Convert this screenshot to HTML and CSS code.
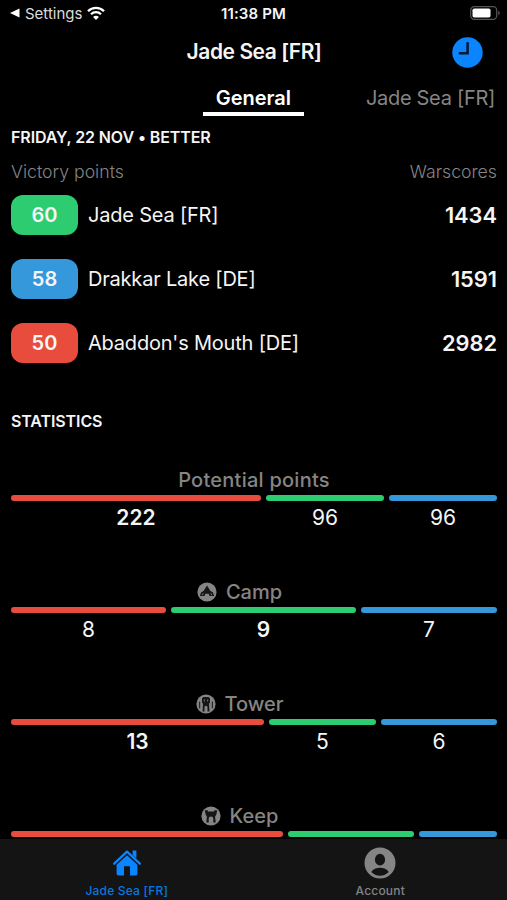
FILE: index.html
```html
<!DOCTYPE html>
<html lang="en">
<head>
  <meta charset="UTF-8">
  <title>Jade Sea [FR]</title>
  <meta name="viewport" content="width=device-width, initial-scale=1.0">
  <link rel="stylesheet" href="styles.css">
</head>
<body>

  <div class="status">
    <div class="status-left">
      <svg width="10" height="10" viewBox="0 0 10 10"><path d="M0 5 9.5 .5v9z" fill="#fff"/></svg>
      <span class="back">Settings</span>
      <svg class="wifi" width="18" height="14" viewBox="0 0 18 14" fill="none" stroke="#fff" stroke-width="2.3">
        <path d="M1 5.2a11.3 11.3 0 0 1 16 0M4 8.3a7 7 0 0 1 10 0"/>
        <path d="M9 14 6.1 10.9a4 4 0 0 1 5.8 0z" fill="#fff" stroke="none"/>
      </svg>
    </div>
    <div class="time">11:38 PM</div>
    <div class="status-right">
      <svg width="30" height="14" viewBox="0 0 30 14">
        <rect x=".7" y=".7" width="26" height="12.6" rx="3.6" fill="none" stroke="#555" stroke-width="1.2"/>
        <rect x="2.5" y="2.5" width="18" height="9" rx="1.8" fill="#fff"/>
        <path d="M28.2 4.7c2 .8 2 3.8 0 4.6z" fill="#555"/>
      </svg>
    </div>
  </div>

  <div class="nav">
    <h1>Jade Sea [FR]</h1>
    <svg class="clock" width="31" height="31" viewBox="0 0 31 31">
      <circle cx="15.5" cy="15.5" r="15.2" fill="#0a84ff"/>
      <path d="M15.6 5.2v11.1H6.8" fill="none" stroke="#03182e" stroke-width="2.5"/>
    </svg>
  </div>

  <div class="tabs">
    <div class="tab active">General</div>
    <div class="tab">Jade Sea [FR]</div>
  </div>

  <div class="content">
    <h2>FRIDAY, 22 NOV • BETTER</h2>
    <div class="labels"><span>Victory points</span><span>Warscores</span></div>
    <div class="world">
      <div class="badge green">60</div>
      <div class="name">Jade Sea [FR]</div>
      <div class="score">1434</div>
    </div>
    <div class="world">
      <div class="badge blue">58</div>
      <div class="name">Drakkar Lake [DE]</div>
      <div class="score">1591</div>
    </div>
    <div class="world">
      <div class="badge red">50</div>
      <div class="name">Abaddon's Mouth [DE]</div>
      <div class="score">2982</div>
    </div>

    <h2 class="stats-title">STATISTICS</h2>

    <div class="stat">
      <div class="stat-name total">Potential points</div>
      <div class="bars">
        <div class="part best" style="width: 250px"><div class="bar red"></div>222</div>
        <div class="part" style="width: 118px"><div class="bar green"></div>96</div>
        <div class="part" style="width: 108px"><div class="bar blue"></div>96</div>
      </div>
    </div>

    <div class="stat">
      <div class="stat-name">
        <svg width="20" height="20" viewBox="0 0 20 20">
          <circle cx="10" cy="10" r="9.6" fill="#858585"/>
          <path d="M10 3.4 11.6 6l1.8 3 2.4 1.2 1.4 3.8h-4.6l-1-2.2H8.4l-1 2.2H2.8l1.4-3.8L6.6 9l1.8-3z" fill="#161616"/>
          <path d="M5.2 13.2l1-1.9M14.8 13.2l-1-1.9" stroke="#777" stroke-width="1"/>
        </svg>
        Camp
      </div>
      <div class="bars">
        <div class="part" style="width: 155px"><div class="bar red"></div>8</div>
        <div class="part best" style="width: 185px"><div class="bar green"></div>9</div>
        <div class="part" style="width: 136px"><div class="bar blue"></div>7</div>
      </div>
    </div>

    <div class="stat">
      <div class="stat-name">
        <svg width="20" height="20" viewBox="0 0 20 20">
          <circle cx="10" cy="10" r="9.6" fill="#858585"/>
          <path d="M6 4.3 7.5 3h5L14 4.3v4.2l-1 1.3.5 7.7h-2v-4.3a1.5 1.5 0 0 0-3 0v4.3h-2L7 9.8 6 8.5z" fill="#161616"/>
          <path d="M3.6 7.5v6.7M16.4 7.5v6.7" stroke="#292929" stroke-width="1.3"/>
          <path d="M8.3 5.5v2M11.7 5.5v2" stroke="#777" stroke-width="1"/>
        </svg>
        Tower
      </div>
      <div class="bars">
        <div class="part best" style="width: 253px"><div class="bar red"></div>13</div>
        <div class="part" style="width: 107px"><div class="bar green"></div>5</div>
        <div class="part" style="width: 116px"><div class="bar blue"></div>6</div>
      </div>
    </div>

    <div class="stat">
      <div class="stat-name">
        <svg width="20" height="20" viewBox="0 0 20 20">
          <circle cx="10" cy="10" r="9.6" fill="#858585"/>
          <path d="M3.8 4.3h3v1.2h6.4V4.3h3l-.9 4.4-1.2 1.8.6 5.9h-2.4v-3.7a2.3 2.3 0 0 0-4.6 0v3.7H5.3l.6-5.9-1.2-1.8z" fill="#161616"/>
        </svg>
        Keep
      </div>
      <div class="bars">
        <div class="part best" style="width: 272px"><div class="bar red"></div></div>
        <div class="part" style="width: 126px"><div class="bar green"></div></div>
        <div class="part" style="width: 78px"><div class="bar blue"></div></div>
      </div>
    </div>
  </div>

  <div class="tabbar">
    <div class="tabbar-item selected">
      <svg width="32" height="32" viewBox="0 0 32 32">
        <path d="M3.2 16.7 16 4.6l12.8 12.1" fill="none" stroke="#0a84ff" stroke-width="2.3" stroke-linecap="round" stroke-linejoin="round"/>
        <path d="M21.6 3.6h3.8v8l-3.8-3.5z" fill="#0a84ff"/>
        <path d="M16 8.2 26.4 17.8v8.8a1.9 1.9 0 0 1-1.9 1.9H19v-9.2h-6v9.2H7.5a1.9 1.9 0 0 1-1.9-1.9v-8.8z" fill="#0a84ff"/>
      </svg>
      <span>Jade Sea [FR]</span>
    </div>
    <div class="tabbar-item">
      <svg width="32" height="32" viewBox="0 0 32 32">
        <circle cx="16" cy="16" r="15.5" fill="#858585"/>
        <ellipse cx="16" cy="12.7" rx="5.1" ry="5.9" fill="#141414"/>
        <path d="M7.4 24.9c1.5-3 5-4.2 8.6-4.2s7.1 1.2 8.6 4.2c-2.1 2.4-5.1 3.8-8.6 3.8s-6.5-1.4-8.6-3.8z" fill="#141414"/>
      </svg>
      <span>Account</span>
    </div>
  </div>

</body>
</html>
```
FILE: styles.css
```css
* {
  box-sizing: border-box;
}

body {
  margin: 0;
  height: 900px;
  overflow: hidden;
  background: #000;
  color: #f5f5f5;
  font-family: Inter, sans-serif;
  font-size: 20px;
  display: flex;
  flex-direction: column;
}

svg {
  display: block;
  flex: none;
}

.status {
  height: 26px;
  flex: none;
  display: grid;
  grid-template-columns: 1fr auto 1fr;
  align-items: center;
  padding: 0 7px 0 10px;
  font-size: 15px;
}

.status-left {
  display: flex;
  align-items: center;
  gap: 5px;
}

.back {
  color: #ddd;
}

.time {
  margin-right: 3px;
  font-weight: 600;
  letter-spacing: 0.15px;
}

.status-right {
  display: flex;
  justify-content: flex-end;
}

.nav {
  height: 52px;
  flex: none;
  display: grid;
  grid-template-columns: 1fr auto 1fr;
  align-items: center;
  padding-right: 24px;
  padding-left: 25px;
}

h1 {
  grid-column: 2;
  margin: 0;
  font-size: 21px;
  line-height: 26px;
  font-weight: 600;
  letter-spacing: -0.45px;
}

.clock {
  justify-self: end;
}

.tabs {
  height: 38px;
  flex: none;
  display: flex;
  justify-content: flex-end;
  gap: 62px;
  padding-right: 12px;
  line-height: 40px;
  color: #858585;
}

.tab {
  letter-spacing: -0.3px;
}

.tab.active {
  width: 101px;
  text-align: center;
  color: #fff;
  font-weight: 600;
  letter-spacing: 0;
  border-bottom: 4px solid #fff;
}

.content {
  flex: 1;
  overflow: hidden;
  padding: 11px 10px 0 11px;
}

h2 {
  margin: 0;
  font-size: 16px;
  line-height: 20px;
  font-weight: 600;
  letter-spacing: -0.1px;
}

.labels {
  display: flex;
  justify-content: space-between;
  margin-top: 15px;
  margin-bottom: 13px;
  font-size: 17.7px;
  line-height: 20px;
  font-weight: 300;
  color: #858585;
}

.world {
  display: flex;
  align-items: center;
  height: 40px;
  margin-bottom: 24px;
}

.badge {
  width: 67px;
  height: 40px;
  border-radius: 12px;
  text-align: center;
  line-height: 40px;
  font-weight: 600;
}

.name {
  flex: 1;
  margin-left: 10px;
  letter-spacing: -0.2px;
}

.score {
  font-size: 21.8px;
  font-weight: 600;
}

.green {
  background: #2ecc71;
}

.blue {
  background: #3498db;
}

.red {
  background: #e74c3c;
}

.stats-title {
  margin-top: 48px;
}

.stat {
  height: 112px;
}

.stats-title + .stat {
  margin-top: 36px;
}

.stat-name {
  height: 28px;
  padding-right: 29px;
  padding-bottom: 2px;
  display: flex;
  align-items: center;
  justify-content: center;
  gap: 9px;
  color: #858585;
  font-weight: 500;
}

.stat-name.total {
  padding-right: 0;
  letter-spacing: 0.25px;
}

.bars {
  display: flex;
  gap: 5px;
}

.part {
  text-align: center;
  font-size: 21px;
  line-height: 34px;
}

.part.best {
  font-weight: 600;
}

.bar {
  height: 6px;
  border-radius: 3px;
}

.tabbar {
  height: 61px;
  flex: none;
  display: flex;
  background: #141414;
}

.tabbar-item {
  flex: 1;
  display: flex;
  flex-direction: column;
  align-items: center;
  padding-top: 8px;
  font-size: 12px;
  line-height: 15px;
  font-weight: 500;
  letter-spacing: 0.2px;
  color: #858585;
}

.tabbar-item span {
  margin-top: 4px;
}

.tabbar-item.selected {
  color: #0878e0;
}
```
